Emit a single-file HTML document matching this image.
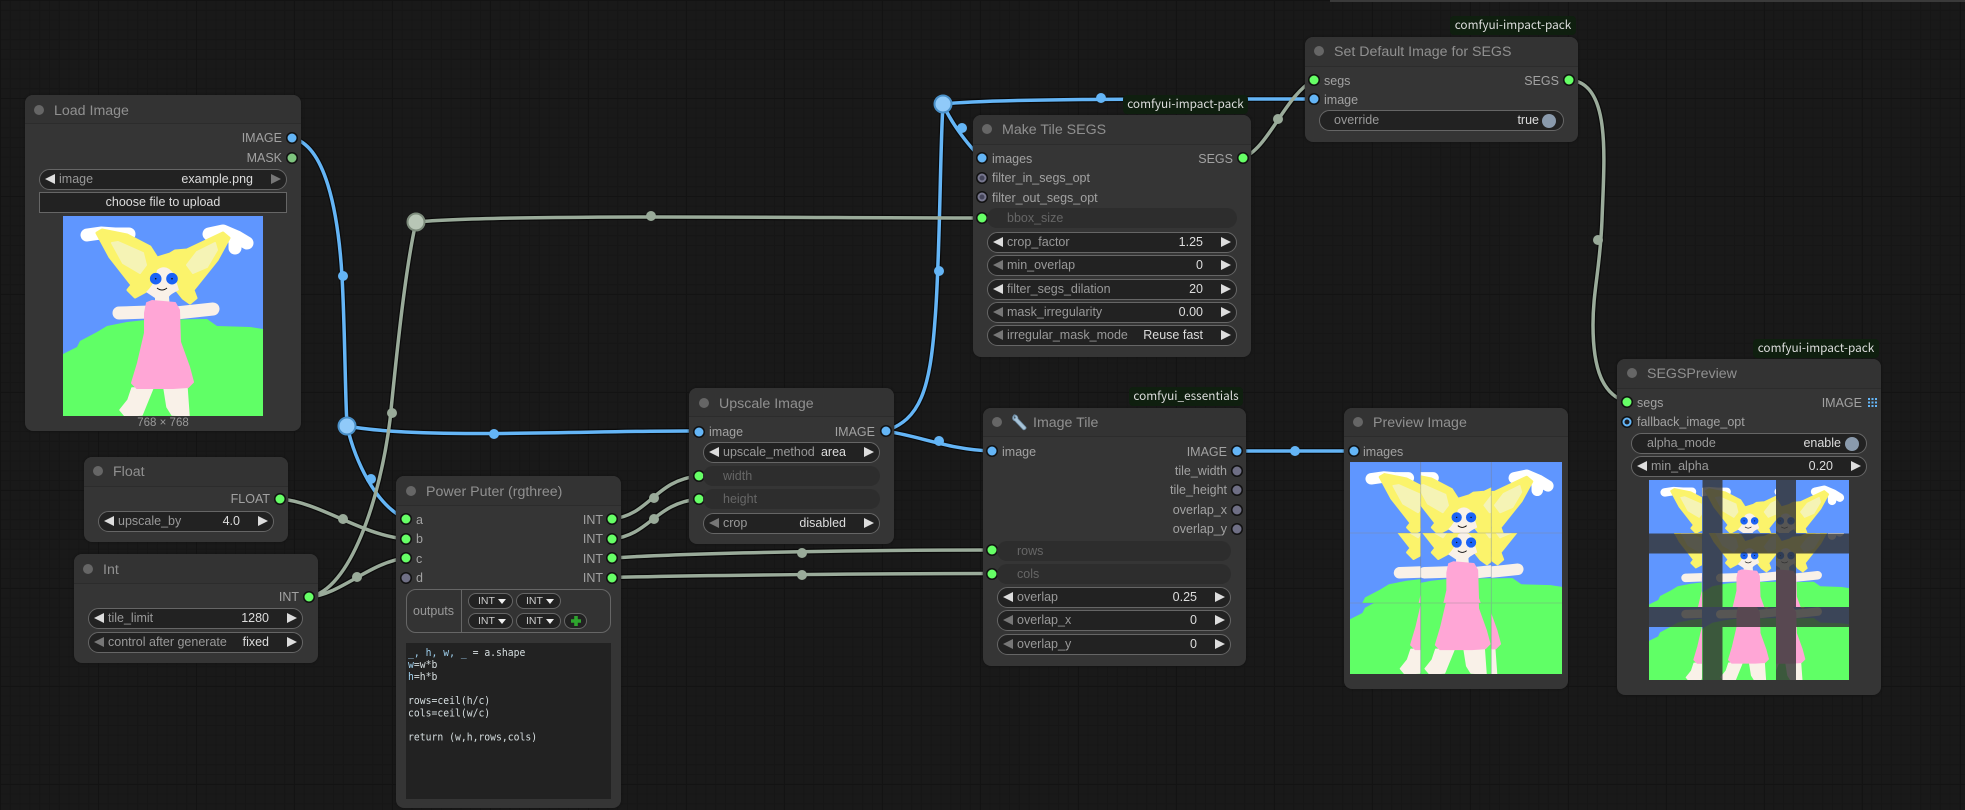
<!DOCTYPE html>
<html><head><meta charset="utf-8">
<style>
html,body{margin:0;padding:0;width:1965px;height:810px;overflow:hidden;background:#191919}
#bg{position:absolute;left:0;top:0;width:1965px;height:810px;background-color:#191919;
background-image:linear-gradient(#131313 1px,transparent 1px),linear-gradient(90deg,#131313 1px,transparent 1px),linear-gradient(#161616 1px,transparent 1px),linear-gradient(90deg,#161616 1px,transparent 1px);
background-size:98px 98px,98px 98px,9.8px 9.8px,9.8px 9.8px}
#top{position:absolute;left:1330px;top:0;width:635px;height:2px;background:#3a3a3a}
svg.abs{position:absolute;left:0;top:0}
*{box-sizing:border-box}
body{font-family:"Liberation Sans",sans-serif}
.n{position:absolute;background:#353535;border-radius:8px;box-shadow:0 0 2px #111}
.h{position:absolute;left:0;right:0;top:0;background:#333;border-bottom:1px solid #2c2c2c;border-radius:8px 8px 0 0}
.dot{position:absolute;width:10px;height:10px;border-radius:50%;background:#666;transform:translate(-50%,-50%)}
.ti{position:absolute;color:#909090;font-size:14.2px;line-height:18px;margin-top:1px;transform:translateY(-50%);white-space:nowrap}
.l{position:absolute;color:#a2a2a2;font-size:12.5px;line-height:16px;transform:translateY(-50%);white-space:nowrap}
.r{position:absolute;color:#a2a2a2;font-size:12.5px;line-height:16px;transform:translateY(-50%);white-space:nowrap;text-align:right}
.p{position:absolute;width:9px;height:9px;border-radius:50%;transform:translate(-50%,-50%);box-shadow:0 0 0 1.5px #111}
.b{background:#64b5f6}.g{background:#66ff66}.gr{background:#6f6f85}.lg{background:#7ec47e}
.rb{background:#1c1c22;border:2.5px solid #64b5f6}.rg{background:#45455a;border:2.5px solid #77778f}
.w{position:absolute;background:#222;border:1px solid #666;border-radius:11px;height:21px}
.w .a{position:absolute;top:4px;width:0;height:0;border-top:5.5px solid transparent;border-bottom:5.5px solid transparent}
.w .al{left:5px;border-right:10px solid #ddd}.w .ar{right:5px;border-left:10px solid #ddd}
.w .al.x{border-right-color:#777}.w .ar.x{border-left-color:#777}
.w .k{position:absolute;left:19px;top:0;line-height:19px;font-size:12.5px;color:#999;white-space:nowrap}
.w .v{position:absolute;right:33px;top:0;line-height:19px;font-size:12.5px;color:#ddd;white-space:nowrap}
.off{position:absolute;background:#2d2d2d;border-radius:11px;height:20px;color:#666;font-size:12.5px;line-height:20px;padding-left:20px}
.btn{position:absolute;background:#222;border:1px solid #666;color:#ddd;font-size:12.5px;text-align:center;line-height:19px}
.badge{position:absolute;background:#0f1f0f;color:#ddd;font-family:"Noto Sans CJK JP","Liberation Sans",sans-serif;font-size:11.8px;line-height:18px;text-align:center;white-space:nowrap;border-radius:4px}
.chip{position:absolute;background:#222;border:1px solid #666;border-radius:8px;height:16px;width:45px;color:#ccc;font-size:10.5px;line-height:14px;padding-left:9px}
.chip i{position:absolute;right:6px;top:5px;width:0;height:0;border-left:4px solid transparent;border-right:4px solid transparent;border-top:5px solid #eee}
#code{position:absolute;left:406px;top:643px;width:205px;height:156px;background:#222;margin:0;padding:0}
#code pre{margin:0;padding:0;position:absolute;left:2px;top:4px;color:#d6dee0;font-family:"DejaVu Sans Mono",monospace;font-size:9.75px;line-height:11px;white-space:pre;transform:scaleY(1.1);transform-origin:0 0}
#code b{font-weight:normal;color:#9fd0ee}
</style></head><body>
<div id="bg"></div><div id="top"></div>

<svg width="0" height="0" style="position:absolute">
<defs>
<g id="girl">
<rect width="200" height="200" fill="#5f96ff"/>
<path d="M0,138 L14,131 L17,125 L34,116 L44,110 L64,106 L82,104 L144,103 L154,110 L187,111 L200,113 L200,200 L0,200Z" fill="#60ff66"/>
<path d="M24,19 L38,17 L52,18 L66,18" stroke="#fff" stroke-width="13" stroke-linecap="round" stroke-linejoin="round" fill="none"/>
<path d="M146,18 L160,15 L174,21 L184,27 M172,24 L172,32" stroke="#fff" stroke-width="13" stroke-linecap="round" stroke-linejoin="round" fill="none"/>
<path d="M34,17 L39,14 L64,19 L87,31 L94,42 L107,38 L112,35 L124,34 L160,17 L166,22 L154,44 L130,74 L133,82 L127,87 L120,82 L112,72 L85,74 L72,81 L65,74 L69,69 L47,41Z" fill="#fbf36b" stroke="#fbf36b" stroke-width="3" stroke-linejoin="round"/>
<path d="M49,27 L55,26 L80,37 L83,49 L77,57 L60,47Z M124,49 L134,36 L152,27 L154,34 L144,51 L130,57Z" fill="#f5f3b5" stroke="#f5f3b5" stroke-width="2" stroke-linejoin="round"/>
<path d="M94,54 Q103,47 111,58 L116,74 Q106,79 106,81 L107,92 L92,92 L92,82 L83,76 Q92,68 94,54Z" fill="#f9f1e8"/>
<circle cx="92.7" cy="62.7" r="5.8" fill="#1b63f5"/><circle cx="109" cy="62.7" r="5.8" fill="#1b63f5"/>
<circle cx="92.7" cy="62.7" r=".8" fill="#111"/><circle cx="109" cy="62.7" r=".8" fill="#111"/>
<path d="M94,72 Q99,76 104,72" fill="none" stroke="#111" stroke-width="1"/>
<path d="M56,97 L86,96 M113,97 L150,93" stroke="#f9f1e8" stroke-width="13" stroke-linecap="round" fill="none"/>
<path d="M69,172 L90,172 L79,199 L62,200 L57,194 L65,184Z M101,172 L124,172 L126,200 L109,199 L104,191Z" fill="#f9f1e8" stroke="#f9f1e8" stroke-width="1.5" stroke-linejoin="round"/>
<path d="M84,87 L89,85 L112,87 L116,94 L117,126 L126,151 L130,166 L125,171 L110,172 L74,172 L69,167 L75,147 L82,117 L82,97Z" fill="#ffa6d6" stroke="#ffa6d6" stroke-width="2" stroke-linejoin="round"/>
</g>
</defs>
</svg>

<!-- wires -->
<svg class="abs" width="1965" height="810" viewBox="0 0 1965 810">
<g fill="none" stroke-linecap="round">
<g stroke="#000" stroke-opacity=".55" stroke-width="6">
<path d="M292,138 C325,145 338,210 342,276 C345,330 345,390 347,426"/><path d="M347,426 C355,460 375,505 406,519"/><path d="M347,426 C420,440 600,430 699,431"/>
<path d="M885,431 C920,420 930,390 935,320 C940,260 940,150 943,104"/><path d="M885,431 C920,436 950,450 992,451"/><path d="M943,104 C952,125 972,150 982,158"/><path d="M943,104 C1000,98 1200,99 1314,99"/>
<path d="M1242,158 C1268,150 1285,95 1314,80"/><path d="M1569,80 C1612,82 1604,160 1602,220 C1600,270 1593,290 1593,325 C1593,370 1603,395 1627,402"/>
<path d="M309,597 C350,590 380,500 390,420 C396,360 405,270 416,222"/><path d="M416,222 C500,214 800,218 982,218"/>
<path d="M309,597 C340,595 370,562 406,558"/><path d="M280,499 C320,502 360,535 406,539"/>
<path d="M612,519 C650,515 655,480 699,476"/><path d="M612,539 C650,535 655,503 699,499"/>
<path d="M612,558 C700,552 900,550 992,550"/><path d="M612,577.5 C700,575 900,573.5 992,573.5"/><path d="M1237,451 L1353,451"/>
</g>
<g stroke="#64b5f6" stroke-width="3.5">
<path d="M292,138 C325,145 338,210 342,276 C345,330 345,390 347,426"/><path d="M347,426 C355,460 375,505 406,519"/><path d="M347,426 C420,440 600,430 699,431"/>
<path d="M885,431 C920,420 930,390 935,320 C940,260 940,150 943,104"/><path d="M885,431 C920,436 950,450 992,451"/><path d="M943,104 C952,125 972,150 982,158"/><path d="M943,104 C1000,98 1200,99 1314,99"/><path d="M1237,451 L1353,451"/>
</g>
<g stroke="#9aab9a" stroke-width="3.5">
<path d="M1242,158 C1268,150 1285,95 1314,80"/><path d="M1569,80 C1612,82 1604,160 1602,220 C1600,270 1593,290 1593,325 C1593,370 1603,395 1627,402"/>
<path d="M309,597 C350,590 380,500 390,420 C396,360 405,270 416,222"/><path d="M416,222 C500,214 800,218 982,218"/>
<path d="M309,597 C340,595 370,562 406,558"/><path d="M280,499 C320,502 360,535 406,539"/>
<path d="M612,519 C650,515 655,480 699,476"/><path d="M612,539 C650,535 655,503 699,499"/>
<path d="M612,558 C700,552 900,550 992,550"/><path d="M612,577.5 C700,575 900,573.5 992,573.5"/>
</g>
</g>
<g fill="#64b5f6">
<circle cx="343" cy="276" r="5"/><circle cx="371" cy="479" r="5"/><circle cx="494" cy="434" r="5"/><circle cx="939" cy="271" r="5"/><circle cx="939" cy="441" r="5"/><circle cx="962" cy="128" r="5"/><circle cx="1101" cy="98" r="5"/><circle cx="1295" cy="451" r="5"/>
</g>
<g fill="#9aab9a">
<circle cx="1278" cy="119" r="5"/><circle cx="1598" cy="240" r="5"/><circle cx="392" cy="413" r="5"/><circle cx="651" cy="216" r="5"/><circle cx="357" cy="577" r="5"/><circle cx="343" cy="519" r="5"/><circle cx="654" cy="498" r="5"/><circle cx="654" cy="519" r="5"/><circle cx="802" cy="553" r="5"/><circle cx="802" cy="575" r="5"/>
</g>
<circle cx="347" cy="426" r="8.5" fill="#90caf9" stroke="#4a90c8" stroke-width="2"/>
<circle cx="943" cy="104" r="8.5" fill="#90caf9" stroke="#4a90c8" stroke-width="2"/>
<circle cx="416" cy="222" r="8.5" fill="#b8c6b6" stroke="#7d8c7c" stroke-width="2"/>
</svg>

<!-- Load Image -->
<div class="n" style="left:25px;top:95px;width:276px;height:336px"><div class="h" style="height:29px"></div></div>
<div class="dot" style="left:39px;top:110px"></div><div class="ti" style="left:54px;top:110px">Load Image</div>
<div class="r" style="right:1683px;top:138px">IMAGE</div><div class="p b" style="left:292px;top:138px"></div>
<div class="r" style="right:1683px;top:158px">MASK</div><div class="p lg" style="left:292px;top:158px"></div>
<div class="w" style="left:39px;top:169px;width:248px"><i class="a al"></i><span class="k">image</span><span class="v">example.png</span><i class="a ar x"></i></div>
<div class="btn" style="left:39px;top:192px;width:248px;height:21px">choose file to upload</div>
<svg class="abs" style="left:63px;top:216px" width="200" height="200" viewBox="0 0 200 200"><use href="#girl"/></svg>
<div style="position:absolute;left:63px;width:200px;top:416px;text-align:center;color:#999;font-size:11.5px;line-height:15px">768 × 768</div>

<!-- Float -->
<div class="n" style="left:84px;top:457px;width:204px;height:85px"><div class="h" style="height:30px"></div></div>
<div class="dot" style="left:98px;top:471px"></div><div class="ti" style="left:113px;top:471px">Float</div>
<div class="r" style="right:1695px;top:499px">FLOAT</div><div class="p g" style="left:280px;top:499px"></div>
<div class="w" style="left:98px;top:511px;width:176px"><i class="a al"></i><span class="k">upscale_by</span><span class="v">4.0</span><i class="a ar"></i></div>

<!-- Int -->
<div class="n" style="left:74px;top:554px;width:244px;height:109px"><div class="h" style="height:30px"></div></div>
<div class="dot" style="left:88px;top:569px"></div><div class="ti" style="left:103px;top:569px">Int</div>
<div class="r" style="right:1666px;top:597px">INT</div><div class="p g" style="left:309px;top:597px"></div>
<div class="w" style="left:88px;top:608px;width:215px"><i class="a al"></i><span class="k">tile_limit</span><span class="v">1280</span><i class="a ar"></i></div>
<div class="w" style="left:88px;top:632px;width:215px"><i class="a al x"></i><span class="k">control after generate</span><span class="v">fixed</span><i class="a ar"></i></div>

<!-- Power Puter -->
<div class="n" style="left:396px;top:476px;width:225px;height:332px"><div class="h" style="height:30px"></div></div>
<div class="dot" style="left:411px;top:491px"></div><div class="ti" style="left:426px;top:491px">Power Puter (rgthree)</div>
<div class="p g" style="left:406px;top:519px"></div><div class="l" style="left:416px;top:520px">a</div>
<div class="p g" style="left:406px;top:539px"></div><div class="l" style="left:416px;top:539px">b</div>
<div class="p g" style="left:406px;top:558px"></div><div class="l" style="left:416px;top:559px">c</div>
<div class="p gr" style="left:406px;top:577.5px"></div><div class="l" style="left:416px;top:578px">d</div>
<div class="r" style="right:1362px;top:520px">INT</div><div class="p g" style="left:612px;top:519px"></div>
<div class="r" style="right:1362px;top:539px">INT</div><div class="p g" style="left:612px;top:539px"></div>
<div class="r" style="right:1362px;top:559px">INT</div><div class="p g" style="left:612px;top:558px"></div>
<div class="r" style="right:1362px;top:578px">INT</div><div class="p g" style="left:612px;top:577.5px"></div>
<div style="position:absolute;left:406px;top:589px;width:205px;height:44px;border:1px solid #666;border-radius:10px;background:#333"></div>
<div style="position:absolute;left:461px;top:589px;width:1px;height:44px;background:#666"></div>
<div class="l" style="left:413px;top:611px;color:#999;font-size:12.5px">outputs</div>
<div class="chip" style="left:468px;top:593px">INT<i></i></div><div class="chip" style="left:516px;top:593px">INT<i></i></div>
<div class="chip" style="left:468px;top:613px">INT<i></i></div><div class="chip" style="left:516px;top:613px">INT<i></i></div>
<div style="position:absolute;left:564px;top:613px;width:23px;height:16px;border:1px solid #666;border-radius:8px;background:#222"></div>
<svg class="abs" style="left:570px;top:615px" width="12" height="12" viewBox="0 0 12 12"><path d="M6,1 V11 M1,6 H11" stroke="#2ea52e" stroke-width="3.6"/></svg>
<div id="code"><pre><b>_, h, w, _</b> = a.shape
<b>w</b>=w*b
<b>h</b>=h*b

rows=ceil(h/c)
cols=ceil(w/c)

return (w,h,rows,cols)</pre></div>

<!-- Upscale Image -->
<div class="n" style="left:689px;top:388px;width:205px;height:156px"><div class="h" style="height:29px"></div></div>
<div class="dot" style="left:704px;top:403px"></div><div class="ti" style="left:719px;top:403px">Upscale Image</div>
<div class="p b" style="left:699px;top:431.5px"></div><div class="l" style="left:709px;top:432px">image</div>
<div class="r" style="right:1090px;top:432px">IMAGE</div><div class="p b" style="left:885.5px;top:431px"></div>
<div class="w" style="left:703px;top:442px;width:177px"><i class="a al"></i><span class="k">upscale_method</span><span class="v">area</span><i class="a ar"></i></div>
<div class="p g" style="left:699px;top:476px"></div><div class="off" style="left:703px;top:466px;width:177px">width</div>
<div class="p g" style="left:699px;top:499px"></div><div class="off" style="left:703px;top:489px;width:177px">height</div>
<div class="w" style="left:703px;top:513px;width:177px"><i class="a al x"></i><span class="k">crop</span><span class="v">disabled</span><i class="a ar"></i></div>

<!-- Make Tile SEGS -->
<div class="n" style="left:973px;top:115px;width:278px;height:242px"><div class="h" style="height:30px"></div></div>
<div class="dot" style="left:987px;top:129px"></div><div class="ti" style="left:1002px;top:129px">Make Tile SEGS</div>
<div class="p b" style="left:982px;top:158px"></div><div class="l" style="left:992px;top:159px">images</div>
<div class="r" style="right:732px;top:159px">SEGS</div><div class="p g" style="left:1242.5px;top:158px"></div>
<div class="p rg" style="left:982px;top:178px"></div><div class="l" style="left:992px;top:178px">filter_in_segs_opt</div>
<div class="p rg" style="left:982px;top:197px"></div><div class="l" style="left:992px;top:198px">filter_out_segs_opt</div>
<div class="p g" style="left:982px;top:218px"></div><div class="off" style="left:987px;top:208px;width:250px">bbox_size</div>
<div class="w" style="left:987px;top:231.5px;width:250px"><i class="a al"></i><span class="k">crop_factor</span><span class="v">1.25</span><i class="a ar"></i></div>
<div class="w" style="left:987px;top:255px;width:250px"><i class="a al x"></i><span class="k">min_overlap</span><span class="v">0</span><i class="a ar"></i></div>
<div class="w" style="left:987px;top:278.5px;width:250px"><i class="a al"></i><span class="k">filter_segs_dilation</span><span class="v">20</span><i class="a ar"></i></div>
<div class="w" style="left:987px;top:302px;width:250px"><i class="a al x"></i><span class="k">mask_irregularity</span><span class="v">0.00</span><i class="a ar"></i></div>
<div class="w" style="left:987px;top:325px;width:250px"><i class="a al x"></i><span class="k">irregular_mask_mode</span><span class="v">Reuse fast</span><i class="a ar"></i></div>
<div class="badge" style="left:1123px;top:95px;width:125px;height:19px">comfyui-impact-pack</div>

<!-- Image Tile -->
<div class="n" style="left:983px;top:408px;width:263px;height:258px"><div class="h" style="height:29px"></div></div>
<div class="dot" style="left:997px;top:422px"></div>
<svg class="abs" style="left:1011px;top:414px" width="17" height="17" viewBox="0 0 17 17"><path d="M3,1 C1,3 1,6 4,7 L12,15.500 C13.500,16.500 15.800,14.500 14.800,13 L7,4.800 C7,2.500 5.500,.5 3,1 L4.800,3.800 L3,5 Z" fill="#a8c4d8" stroke="#6f8ea6" stroke-width=".8"/></svg>
<div class="ti" style="left:1033px;top:422px">Image Tile</div>
<div class="p b" style="left:992px;top:451px"></div><div class="l" style="left:1002px;top:452px">image</div>
<div class="r" style="right:738px;top:452px">IMAGE</div><div class="p b" style="left:1237px;top:451px"></div>
<div class="r" style="right:738px;top:471px">tile_width</div><div class="p gr" style="left:1237px;top:470.5px"></div>
<div class="r" style="right:738px;top:490px">tile_height</div><div class="p gr" style="left:1237px;top:490px"></div>
<div class="r" style="right:738px;top:510px">overlap_x</div><div class="p gr" style="left:1237px;top:509.5px"></div>
<div class="r" style="right:738px;top:529px">overlap_y</div><div class="p gr" style="left:1237px;top:529px"></div>
<div class="p g" style="left:992px;top:550px"></div><div class="off" style="left:997px;top:541px;width:234px">rows</div>
<div class="p g" style="left:992px;top:573.5px"></div><div class="off" style="left:997px;top:564px;width:234px">cols</div>
<div class="w" style="left:997px;top:587px;width:234px"><i class="a al"></i><span class="k">overlap</span><span class="v">0.25</span><i class="a ar"></i></div>
<div class="w" style="left:997px;top:610px;width:234px"><i class="a al x"></i><span class="k">overlap_x</span><span class="v">0</span><i class="a ar"></i></div>
<div class="w" style="left:997px;top:634px;width:234px"><i class="a al x"></i><span class="k">overlap_y</span><span class="v">0</span><i class="a ar"></i></div>
<div class="badge" style="left:1129px;top:387px;width:114px;height:19px">comfyui_essentials</div>

<!-- Preview Image -->
<div class="n" style="left:1344px;top:408px;width:224px;height:281px"><div class="h" style="height:29px"></div></div>
<div class="dot" style="left:1358px;top:422px"></div><div class="ti" style="left:1373px;top:422px">Preview Image</div>
<div class="p b" style="left:1353.5px;top:451px"></div><div class="l" style="left:1363px;top:452px">images</div>
<svg class="abs" style="left:1350px;top:462px" width="212" height="212" viewBox="0 0 212 212">
<svg x="0" y="0" width="70.700" height="71" viewBox="0 0 80 80.300"><use href="#girl"/></svg>
<svg x="70.700" y="0" width="70.700" height="71" viewBox="52 0 80 80.300"><use href="#girl"/></svg>
<svg x="141.300" y="0" width="70.700" height="71" viewBox="120 0 80 80.300"><use href="#girl"/></svg>
<svg x="0" y="71" width="70.700" height="70" viewBox="0 52 80 79.200"><use href="#girl"/></svg>
<svg x="70.700" y="71" width="70.700" height="70" viewBox="52 52 80 79.200"><use href="#girl"/></svg>
<svg x="141.300" y="71" width="70.700" height="70" viewBox="120 52 80 79.200"><use href="#girl"/></svg>
<svg x="0" y="141" width="70.700" height="71" viewBox="0 119.700 80 80.300"><use href="#girl"/></svg>
<svg x="70.700" y="141" width="70.700" height="71" viewBox="52 119.700 80 80.300"><use href="#girl"/></svg>
<svg x="141.300" y="141" width="70.700" height="71" viewBox="120 119.700 80 80.300"><use href="#girl"/></svg>
<path d="M70.700,0 V212 M141.300,0 V212 M0,71 H212 M0,141 H212" stroke="#888" stroke-opacity=".35" stroke-width="1"/>
</svg>

<!-- Set Default -->
<div class="n" style="left:1305px;top:37px;width:273px;height:105px"><div class="h" style="height:30px"></div></div>
<div class="dot" style="left:1319px;top:51px"></div><div class="ti" style="left:1334px;top:51px">Set Default Image for SEGS</div>
<div class="p g" style="left:1314px;top:80px"></div><div class="l" style="left:1324px;top:81px">segs</div>
<div class="p b" style="left:1314px;top:99px"></div><div class="l" style="left:1324px;top:100px">image</div>
<div class="r" style="right:406px;top:81px">SEGS</div><div class="p g" style="left:1569px;top:80px"></div>
<div class="w" style="left:1319px;top:110px;width:245px"><span class="k" style="left:14px">override</span><span class="v" style="right:24px">true</span><i style="position:absolute;left:222px;top:2.500px;width:14px;height:14px;border-radius:50%;background:#8a9aac"></i></div>
<div class="badge" style="left:1450px;top:16px;width:126px;height:19px">comfyui-impact-pack</div>

<!-- SEGSPreview -->
<div class="n" style="left:1617px;top:359px;width:264px;height:336px"><div class="h" style="height:30px"></div></div>
<div class="dot" style="left:1632px;top:373px"></div><div class="ti" style="left:1647px;top:373px">SEGSPreview</div>
<div class="p g" style="left:1627px;top:402px"></div><div class="l" style="left:1637px;top:403px">segs</div>
<div class="p rb" style="left:1627px;top:421.5px"></div><div class="l" style="left:1637px;top:422px">fallback_image_opt</div>
<div class="r" style="right:103px;top:403px">IMAGE</div>
<svg class="abs" style="left:1868px;top:398px" width="9" height="9" viewBox="0 0 9 9"><path d="M0,0h2v2h-2z M3.500,0h2v2h-2z M7,0h2v2h-2z M0,3.500h2v2h-2z M3.500,3.500h2v2h-2z M7,3.500h2v2h-2z M0,7h2v2h-2z M3.500,7h2v2h-2z M7,7h2v2h-2z" fill="#64b5f6"/></svg>
<div class="w" style="left:1631px;top:433px;width:236px"><span class="k" style="left:15px">alpha_mode</span><span class="v" style="right:25px">enable</span><i style="position:absolute;left:213px;top:2.500px;width:14px;height:14px;border-radius:50%;background:#8a9aac"></i></div>
<div class="w" style="left:1631px;top:456px;width:236px"><i class="a al"></i><span class="k">min_alpha</span><span class="v">0.20</span><i class="a ar"></i></div>
<svg class="abs" style="left:1649px;top:480px" width="200" height="200" viewBox="0 0 200 200">
<rect width="200" height="200" fill="#5f96ff"/>
<svg x="0" y="0" width="73" height="73" viewBox="0 0 112 112"><use href="#girl"/></svg>
<svg x="53" y="0" width="94" height="73" viewBox="28 0 144.600 112"><use href="#girl"/></svg>
<svg x="127" y="0" width="73" height="73" viewBox="86 0 112 112"><use href="#girl"/></svg>
<svg x="0" y="53" width="73" height="94" viewBox="0 28 112 144.600"><use href="#girl"/></svg>
<svg x="53" y="53" width="94" height="94" viewBox="28 28 144.600 144.600"><use href="#girl"/></svg>
<svg x="127" y="53" width="73" height="94" viewBox="86 28 112 144.600"><use href="#girl"/></svg>
<svg x="0" y="127" width="73" height="73" viewBox="0 86 112 112"><use href="#girl"/></svg>
<svg x="53" y="127" width="94" height="73" viewBox="28 86 144.600 112"><use href="#girl"/></svg>
<svg x="127" y="127" width="73" height="73" viewBox="86 86 112 112"><use href="#girl"/></svg>
<path d="M53.500,0h20v200h-20z M127,0h20v200h-20z M0,53.500h53.500v20h-53.500z M73.500,53.500h53.500v20h-53.500z M147,53.500h53v20h-53z M0,127h53.500v20h-53.500z M73.500,127h53.500v20h-53.500z M147,127h53v20h-53z" fill="#333" fill-opacity=".82"/>
</svg>
<div class="badge" style="left:1753px;top:339px;width:126px;height:19px">comfyui-impact-pack</div>
</body></html>
